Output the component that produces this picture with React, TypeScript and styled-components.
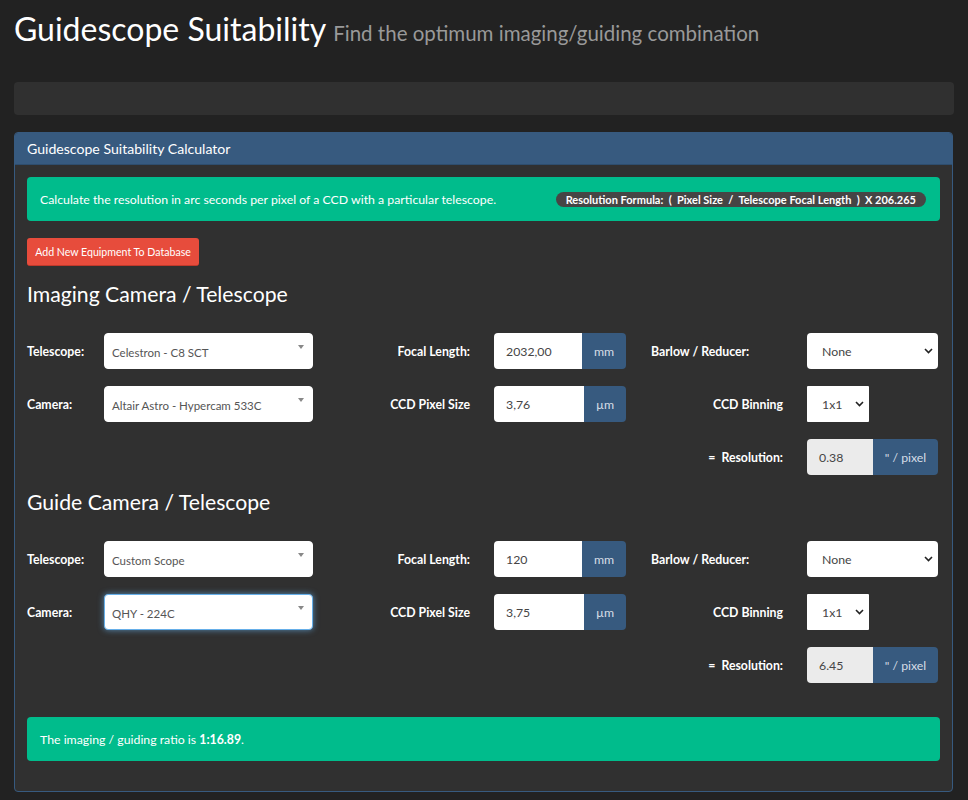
import React from "react";
import styled, { createGlobalStyle } from "styled-components";

const Global = createGlobalStyle`
  html, body { margin: 0; padding: 0; background: #222222; }
  body { font-family: Lato, "Open Sans", sans-serif; color: #ffffff; font-size: 12.3px; }
  * { box-sizing: border-box; }
`;

const Page = styled.div`
  padding: 0 14px 8px 14px;
`;

const Title = styled.h1`
  margin: 0;
  padding-top: 9px;
  height: 49px;
  display: flex;
  align-items: baseline;
  gap: 7px;
  font-size: 32px;
  font-weight: 400;
  line-height: 40px;
  color: #ffffff;
`;

const Sub = styled.small`
  font-size: 20.5px;
  line-height: 40px;
  color: #999999;
  font-weight: 400;
`;

const Bar = styled.div`
  margin-top: 33px;
  height: 33px;
  background: #303030;
  border-radius: 4px;
`;

const Panel = styled.section`
  margin-top: 17px;
  margin-right: 1px;
  background: #303030;
  border: 1px solid #375a7f;
  border-radius: 4px;
  overflow: hidden;
`;

const PanelHeading = styled.div`
  background: #375a7f;
  height: 32px;
  display: flex;
  align-items: center;
  padding: 0 12px;
  font-size: 14.1px;
  color: #ffffff;
  border-bottom: 1px solid #2e4d6d;
`;

const PanelBody = styled.div`
  padding: 12px 12px 13px 12px;
`;

const Alert = styled.div<{ $mt?: number }>`
  background: #00bc8c;
  border-radius: 4px;
  min-height: 44px;
  padding: 0 14px 0 13px;
  display: flex;
  align-items: center;
  justify-content: space-between;
  color: #ffffff;
  font-size: 12.3px;
  margin-top: ${(p) => p.$mt ?? 0}px;
  margin-bottom: 17px;
`;

const Badge = styled.span`
  background: #464545;
  border-radius: 10px;
  padding: 0 10px;
  height: 15px;
  line-height: 15px;
  font-size: 11px;
  font-weight: 700;
  color: #ffffff;
  white-space: pre;
`;

const DangerButton = styled.button`
  display: block;
  background: #e74c3c;
  color: #ffffff;
  border: none;
  border-bottom: 1px solid #c0392b;
  border-radius: 3px;
  height: 28px;
  padding: 0;
  font-family: Lato, sans-serif;
  font-size: 10.6px;
  white-space: nowrap;
  width: 172px;
`;

const SectionTitle = styled.h3<{ $mt: number }>`
  margin: ${(p) => p.$mt}px 0 0 0;
  font-size: 21.2px;
  font-weight: 400;
  line-height: 24px;
  color: #ffffff;
`;

const Rows = styled.div`
  margin-top: 27px;
  display: flex;
  flex-direction: column;
  gap: 17px;
`;

const Row = styled.div`
  display: grid;
  grid-template-columns: 77px 209px 181px 132px 181px 131px;
  height: 36px;
  align-items: center;
`;

const Label = styled.label<{ $align?: "left" | "right"; $col: number }>`
  grid-column: ${(p) => p.$col};
  font-weight: 700;
  font-size: 12.3px;
  color: #ffffff;
  text-align: ${(p) => p.$align ?? "left"};
  padding-right: ${(p) => (p.$align === "right" ? 24 : 0)}px;
  padding-left: ${(p) => (p.$col === 5 && p.$align !== "right" ? 25 : 0)}px;
  white-space: pre;
`;

const ChosenBox = styled.div<{ $focus?: boolean }>`
  grid-column: 2;
  position: relative;
  height: 36px;
  background: #ffffff;
  border-radius: 4px;
  border: 1px solid ${(p) => (p.$focus ? "#66afe9" : "#ffffff")};
  box-shadow: ${(p) => (p.$focus ? "0 0 6px rgba(102,175,233,0.7)" : "none")};
  display: flex;
  align-items: center;
  padding: 3px 0 0 7px;
  color: #555555;
  font-size: 11.5px;
`;

const Caret = styled.span`
  position: absolute;
  right: 8px;
  top: 11px;
  width: 0;
  height: 0;
  border-left: 3px solid transparent;
  border-right: 3px solid transparent;
  border-top: 4px solid #888888;
`;

const InputGroup = styled.div`
  grid-column: 4;
  display: flex;
  height: 36px;
`;

const TextInput = styled.div<{ $readonly?: boolean; $w: number }>`
  width: ${(p) => p.$w}px;
  background: ${(p) => (p.$readonly ? "#ebebeb" : "#ffffff")};
  border-radius: 4px 0 0 4px;
  display: flex;
  align-items: center;
  padding-left: 12px;
  color: #464545;
  font-size: 12.3px;
`;

const Addon = styled.div`
  flex: 1;
  background: #375a7f;
  border-radius: 0 4px 4px 0;
  display: flex;
  align-items: center;
  justify-content: center;
  color: #d6dde6;
  font-size: 12.3px;
`;

const NativeSelect = styled.div<{ $w?: number; $square?: boolean }>`
  grid-column: 6;
  width: ${(p) => (p.$w ? `${p.$w}px` : "100%")};
  height: 36px;
  background: #ffffff;
  border-radius: ${(p) => (p.$square ? 1 : 4)}px;
  display: flex;
  align-items: center;
  justify-content: space-between;
  padding: 0 5px 0 15px;
  color: #464545;
  font-size: 12.3px;
`;

const ResultGroup = styled.div`
  grid-column: 6;
  display: flex;
  height: 36px;
`;

const Chevron = () => (
  <svg width="9" height="6" viewBox="0 0 9 6">
    <path d="M1 1 L4.5 4.5 L8 1" fill="none" stroke="#222" strokeWidth="1.6" />
  </svg>
);

type Section = {
  title: string;
  mt: number;
  scope: string;
  camera: string;
  focus?: boolean;
  focal: string;
  pixel: string;
  res: string;
};

const sections: Section[] = [
  { title: "Imaging Camera / Telescope", mt: 16, scope: "Celestron - C8 SCT", camera: "Altair Astro - Hypercam 533C", focal: "2032,00", pixel: "3,76", res: "0.38" },
  { title: "Guide Camera / Telescope", mt: 15, scope: "Custom Scope", camera: "QHY - 224C", focus: true, focal: "120", pixel: "3,75", res: "6.45" },
];

export default function App() {
  return (
    <Page>
      <Global />
      <Title>
        <span>Guidescope Suitability</span>
        <Sub>Find the optimum imaging/guiding combination</Sub>
      </Title>
      <Bar />
      <Panel>
        <PanelHeading>Guidescope Suitability Calculator</PanelHeading>
        <PanelBody>
          <Alert>
            <span>Calculate the resolution in arc seconds per pixel of a CCD with a particular telescope.</span>
            <Badge>{"Resolution Formula:  (  Pixel Size  /  Telescope Focal Length  )  X 206.265"}</Badge>
          </Alert>
          <DangerButton>Add New Equipment To Database</DangerButton>
          {sections.map((s) => (
            <React.Fragment key={s.title}>
              <SectionTitle $mt={s.mt}>{s.title}</SectionTitle>
              <Rows>
                <Row>
                  <Label $col={1}>Telescope:</Label>
                  <ChosenBox>
                    {s.scope}
                    <Caret />
                  </ChosenBox>
                  <Label $col={3} $align="right">Focal Length:</Label>
                  <InputGroup>
                    <TextInput $w={88}>{s.focal}</TextInput>
                    <Addon>mm</Addon>
                  </InputGroup>
                  <Label $col={5}>Barlow / Reducer:</Label>
                  <NativeSelect>
                    None
                    <Chevron />
                  </NativeSelect>
                </Row>
                <Row>
                  <Label $col={1}>Camera:</Label>
                  <ChosenBox $focus={s.focus}>
                    {s.camera}
                    <Caret />
                  </ChosenBox>
                  <Label $col={3} $align="right">CCD Pixel Size</Label>
                  <InputGroup>
                    <TextInput $w={90}>{s.pixel}</TextInput>
                    <Addon>µm</Addon>
                  </InputGroup>
                  <Label $col={5} $align="right">CCD Binning</Label>
                  <NativeSelect $w={62} $square>
                    1x1
                    <Chevron />
                  </NativeSelect>
                </Row>
                <Row>
                  <Label $col={5} $align="right">{"=  Resolution:"}</Label>
                  <ResultGroup>
                    <TextInput $w={66} $readonly>{s.res}</TextInput>
                    <Addon>" / pixel</Addon>
                  </ResultGroup>
                </Row>
              </Rows>
            </React.Fragment>
          ))}
          <Alert $mt={34}>
            <span>
              The imaging / guiding ratio is <b>1:16.89</b>.
            </span>
          </Alert>
        </PanelBody>
      </Panel>
    </Page>
  );
}
